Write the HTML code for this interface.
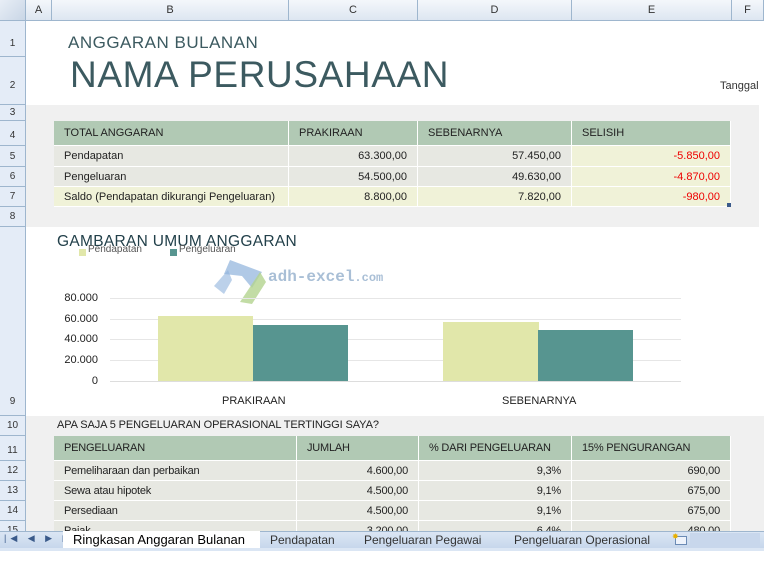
<!DOCTYPE html>
<html><head><meta charset="utf-8"><style>
*{margin:0;padding:0;box-sizing:border-box}
body{width:764px;height:551px;overflow:hidden;background:#fff;font-family:"Liberation Sans",sans-serif;position:relative;color:#222}
.a{position:absolute}
.ch{top:0;height:21px;background:linear-gradient(#f4f7fb,#dde6f1);border-right:1px solid #9eb6ce;border-bottom:1px solid #9eb6ce;font-size:11px;color:#333;text-align:center;line-height:21px}
.rh{left:0;width:26px;background:#e4ecf7;border-bottom:1px solid #9eb6ce;border-right:1px solid #9eb6ce;font-size:10px;color:#333;text-align:center}
.c{position:absolute;font-size:11px;line-height:20px;padding:0 10px;white-space:nowrap;overflow:hidden;border-right:1px solid #fff;border-bottom:1px solid #fff}
.h{background:#b1c9b4;line-height:24px}
.g{background:#e7e8e2}
.y{background:#f0f2d8}
.r{text-align:right}
.red{color:#e00}
.grid{left:110px;width:571px;height:1px;background:#e6e6e6}
.yl{left:60px;width:38px;text-align:right;font-size:11px}
.t2 .c{letter-spacing:-0.2px}
</style></head><body>
<div class="a ch" style="left:0;width:26px;background:linear-gradient(135deg,#e8eef6,#c9d6e6)"></div>
<div class="a ch" style="left:26px;width:26px">A</div>
<div class="a ch" style="left:52px;width:237px">B</div>
<div class="a ch" style="left:289px;width:129px">C</div>
<div class="a ch" style="left:418px;width:154px">D</div>
<div class="a ch" style="left:572px;width:160px">E</div>
<div class="a ch" style="left:732px;width:32px">F</div>
<div class="a rh" style="top:21px;height:36px;line-height:46px">1</div>
<div class="a rh" style="top:57px;height:48px;line-height:58px">2</div>
<div class="a rh" style="top:105px;height:16px;line-height:16px">3</div>
<div class="a rh" style="top:121px;height:25px;line-height:30px">4</div>
<div class="a rh" style="top:146px;height:21px;line-height:21px">5</div>
<div class="a rh" style="top:167px;height:20px;line-height:20px">6</div>
<div class="a rh" style="top:187px;height:20px;line-height:20px">7</div>
<div class="a rh" style="top:207px;height:20px;line-height:20px">8</div>
<div class="a rh" style="top:227px;height:189px;line-height:350px">9</div>
<div class="a rh" style="top:416px;height:20px;line-height:20px">10</div>
<div class="a rh" style="top:436px;height:25px;line-height:30px">11</div>
<div class="a rh" style="top:461px;height:20px;line-height:20px">12</div>
<div class="a rh" style="top:481px;height:20px;line-height:20px">13</div>
<div class="a rh" style="top:501px;height:20px;line-height:20px">14</div>
<div class="a rh" style="top:521px;height:12px;line-height:20px">15</div>
<div class="a" style="left:68px;top:33px;font-size:17px;color:#3c5a60;letter-spacing:0.5px">ANGGARAN BULANAN</div>
<div class="a" style="left:70px;top:54px;font-size:37px;color:#3c5a60;letter-spacing:0.6px">NAMA PERUSAHAAN</div>
<div class="a" style="left:720px;top:80px;font-size:11px;color:#333">Tanggal</div>
<div class="a" style="left:26px;top:105px;width:733px;height:122px;background:#f0f0f0"></div>
<div class="c h" style="left:54px;top:121px;width:235px;height:25px">TOTAL ANGGARAN</div>
<div class="c h" style="left:289px;top:121px;width:129px;height:25px">PRAKIRAAN</div>
<div class="c h" style="left:418px;top:121px;width:154px;height:25px">SEBENARNYA</div>
<div class="c h" style="left:572px;top:121px;width:159px;height:25px">SELISIH</div>
<div class="c g" style="left:54px;top:146px;width:235px;height:21px">Pendapatan</div>
<div class="c g r" style="left:289px;top:146px;width:129px;height:21px">63.300,00</div>
<div class="c g r" style="left:418px;top:146px;width:154px;height:21px">57.450,00</div>
<div class="c y r red" style="left:572px;top:146px;width:159px;height:21px">-5.850,00</div>
<div class="c g" style="left:54px;top:167px;width:235px;height:20px">Pengeluaran</div>
<div class="c g r" style="left:289px;top:167px;width:129px;height:20px">54.500,00</div>
<div class="c g r" style="left:418px;top:167px;width:154px;height:20px">49.630,00</div>
<div class="c y r red" style="left:572px;top:167px;width:159px;height:20px">-4.870,00</div>
<div class="c y" style="left:54px;top:187px;width:235px;height:20px">Saldo (Pendapatan dikurangi Pengeluaran)</div>
<div class="c y r" style="left:289px;top:187px;width:129px;height:20px">8.800,00</div>
<div class="c y r" style="left:418px;top:187px;width:154px;height:20px">7.820,00</div>
<div class="c y r red" style="left:572px;top:187px;width:159px;height:20px">-980,00</div>
<div class="a" style="left:727px;top:203px;width:4px;height:4px;background:#3a5a8a"></div>
<div class="a" style="left:26px;top:227px;width:738px;height:189px;background:#fff"></div>
<div class="a" style="left:57px;top:233px;font-size:15.5px;color:#22404a;letter-spacing:0.3px">GAMBARAN UMUM ANGGARAN</div>
<div class="a" style="left:79px;top:249px;width:7px;height:7px;background:#e1e7aa"></div>
<div class="a" style="left:88px;top:244px;font-size:10px;color:#555">Pendapatan</div>
<div class="a" style="left:170px;top:249px;width:7px;height:7px;background:#579590"></div>
<div class="a" style="left:179px;top:244px;font-size:10px;color:#555">Pengeluaran</div>
<div class="a" style="left:268px;top:268px;font-size:16px;color:#a9bfd6;font-family:'Liberation Mono',monospace;font-weight:bold">adh-excel<span style="font-size:12px">.com</span></div>
<svg class="a" style="left:210px;top:258px" width="60" height="50"><path d="M20 2 L52 14 L42 30 L32 18 L14 16 Z" fill="#8fb2dc" opacity=".7"/><path d="M4 28 L18 12 L22 22 L14 36 Z" fill="#8fb2dc" opacity=".6"/><path d="M30 44 L50 14 L56 24 L42 46 Z" fill="#b3d38e" opacity=".8"/></svg>
<div class="a grid" style="top:298px"></div>
<div class="a grid" style="top:319px"></div>
<div class="a grid" style="top:339px"></div>
<div class="a grid" style="top:360px"></div>
<div class="a grid" style="top:381px;background:#ddd"></div>
<div class="a yl" style="top:292px">80.000</div>
<div class="a yl" style="top:313px">60.000</div>
<div class="a yl" style="top:333px">40.000</div>
<div class="a yl" style="top:354px">20.000</div>
<div class="a yl" style="top:375px">0</div>
<div class="a" style="left:158px;top:316px;width:95px;height:65px;background:#e1e7aa"></div>
<div class="a" style="left:253px;top:325px;width:95px;height:56px;background:#579590"></div>
<div class="a" style="left:443px;top:322px;width:96px;height:59px;background:#e1e7aa"></div>
<div class="a" style="left:538px;top:330px;width:95px;height:51px;background:#579590"></div>
<div class="a" style="left:222px;top:395px;font-size:11px">PRAKIRAAN</div>
<div class="a" style="left:502px;top:395px;font-size:11px">SEBENARNYA</div>
<div class="a" style="left:26px;top:416px;width:738px;height:115px;background:#f0f0f0"></div>
<div class="a" style="left:57px;top:419px;font-size:11px;letter-spacing:-0.1px">APA SAJA 5 PENGELUARAN OPERASIONAL TERTINGGI SAYA?</div>
<div class="t2">
<div class="c h" style="left:54px;top:436px;width:243px;height:25px">PENGELUARAN</div>
<div class="c h" style="left:297px;top:436px;width:122px;height:25px">JUMLAH</div>
<div class="c h" style="left:419px;top:436px;width:153px;height:25px">% DARI PENGELUARAN</div>
<div class="c h" style="left:572px;top:436px;width:159px;height:25px">15% PENGURANGAN</div>
<div class="c g" style="left:54px;top:461px;width:243px;height:20px">Pemeliharaan dan perbaikan</div>
<div class="c g r" style="left:297px;top:461px;width:122px;height:20px">4.600,00</div>
<div class="c g r" style="left:419px;top:461px;width:153px;height:20px">9,3%</div>
<div class="c g r" style="left:572px;top:461px;width:159px;height:20px">690,00</div>
<div class="c g" style="left:54px;top:481px;width:243px;height:20px">Sewa atau hipotek</div>
<div class="c g r" style="left:297px;top:481px;width:122px;height:20px">4.500,00</div>
<div class="c g r" style="left:419px;top:481px;width:153px;height:20px">9,1%</div>
<div class="c g r" style="left:572px;top:481px;width:159px;height:20px">675,00</div>
<div class="c g" style="left:54px;top:501px;width:243px;height:20px">Persediaan</div>
<div class="c g r" style="left:297px;top:501px;width:122px;height:20px">4.500,00</div>
<div class="c g r" style="left:419px;top:501px;width:153px;height:20px">9,1%</div>
<div class="c g r" style="left:572px;top:501px;width:159px;height:20px">675,00</div>
<div class="c g" style="left:54px;top:521px;width:243px;height:20px">Pajak</div>
<div class="c g r" style="left:297px;top:521px;width:122px;height:20px">3.200,00</div>
<div class="c g r" style="left:419px;top:521px;width:153px;height:20px">6,4%</div>
<div class="c g r" style="left:572px;top:521px;width:159px;height:20px">480,00</div>
</div>
<div class="a" style="left:0;top:531px;width:764px;height:20px;background:linear-gradient(#dbe6f4,#c3d4ea);border-top:1px solid #9eb6ce"></div>
<div class="a" style="left:4px;top:533px;font-size:9px;color:#3a5a8a;letter-spacing:4px">|◀ ◀ ▶ ▶|</div>
<div class="a" style="left:63px;top:531px;width:197px;height:17px;background:#fff;font-size:13px;line-height:17px;padding-left:10px;color:#000">Ringkasan Anggaran Bulanan</div>
<div class="a" style="left:270px;top:533px;font-size:12px;color:#333">Pendapatan</div>
<div class="a" style="left:364px;top:533px;font-size:12px;color:#333">Pengeluaran Pegawai</div>
<div class="a" style="left:514px;top:533px;font-size:12px;color:#333">Pengeluaran Operasional</div>
<div class="a" style="left:675px;top:536px;width:12px;height:9px;border:1px solid #6b8bb5;background:#eef3fb"></div>
<div class="a" style="left:672px;top:532px;font-size:8px;color:#e8b000">✸</div>
<div class="a" style="left:690px;top:533px;width:70px;height:15px;background:#c8d7ec"></div>
<div class="a" style="left:0;top:548px;width:764px;height:3px;background:#dbe6f4"></div>
</body></html>
